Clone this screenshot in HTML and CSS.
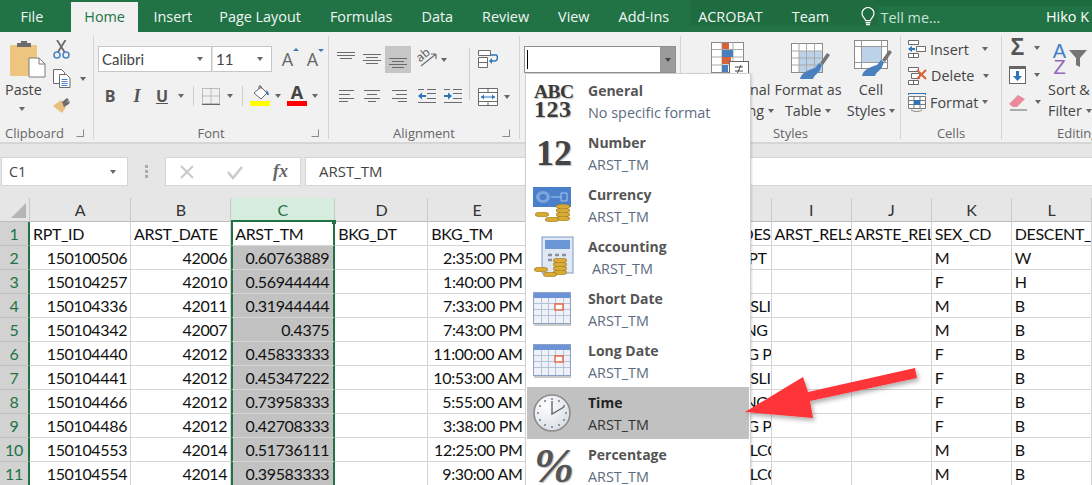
FILE: index.html
```html
<!DOCTYPE html>
<html lang="en">
<head>
<meta charset="utf-8">
<title>Excel number format menu</title>
<link rel="stylesheet" href="styles.css">
</head>
<body>
<svg class="defs" aria-hidden="true">
  <symbol id="lines-l" viewBox="0 0 16 12"><path d="M0 .5h15M0 4.500h11M0 8.500h15M0 11.500h9" stroke="#6b6b6b" fill="none"/></symbol>
  <symbol id="lines-c" viewBox="0 0 16 12"><path d="M0 .5h16M3 4.500h10M0 8.500h16M4 11.500h8" stroke="#6b6b6b" fill="none"/></symbol>
  <symbol id="lines-r" viewBox="0 0 16 12"><path d="M1 .5h15M5 4.500h11M1 8.500h15M7 11.500h9" stroke="#6b6b6b" fill="none"/></symbol>
  <symbol id="calendar" viewBox="0 0 40 34">
    <rect x=".5" y=".5" width="37" height="31" fill="#eef2f8" stroke="#8ea3c4"/>
    <rect x="1" y="1" width="36" height="5" fill="#6b93d6"/>
    <path d="M1 11.500h36M1 17.500h36M1 23.500h36M8.500 6v25M15.500 6v25M22.500 6v25M30.500 6v25" stroke="#b5c1d4" fill="none"/>
    <rect x="22" y="12" width="8" height="6" fill="#fff" stroke="#e8613c" stroke-width="1.400"/>
    <path d="M1 33h37" stroke="#c9c9c9" stroke-width="2"/>
  </symbol>
  <symbol id="coin" viewBox="0 0 14 5"><ellipse cx="7" cy="2.500" rx="7" ry="2.500" fill="#d9ab35" stroke="#8b6a14" stroke-width=".6"/></symbol>
</svg>

<div class="app">
  <nav class="tabs">
    <span class="tab file">File</span>
    <span class="tab active">Home</span>
    <span class="tab ins">Insert</span>
    <span class="tab">Page Layout</span>
    <span class="tab">Formulas</span>
    <span class="tab">Data</span>
    <span class="tab">Review</span>
    <span class="tab">View</span>
    <span class="tab">Add-ins</span>
    <span class="tab">ACROBAT</span>
    <span class="tab">Team</span>
    <span class="tell">
      <svg class="bulb" width="14" height="20" viewBox="0 0 14 20"><path d="M4.500 13.500C4 11 1 9.500 1 6.500a6 6 0 0 1 12 0c0 3-3 4.500-3.500 7z" fill="none" stroke="#fff" stroke-width="1.200"/><path d="M4.500 15.500h5M5 17.500h4" stroke="#fff" stroke-width="1.300"/></svg>
      <span class="tell-text">Tell me...</span>
    </span>
    <span class="user">Hiko K</span>
  </nav>

  <section class="ribbon">
    <div class="group clipboard">
      <div class="body clip-body">
        <div class="paste">
          <svg width="36" height="38" viewBox="0 0 36 38"><rect x="0" y="5" width="27" height="31" rx="1" fill="#eec57e"/><path d="M7 7V3h4V1h6v2h4v4z" fill="#6d6d6d"/><path d="M19 18h10l6 6v13H19z" fill="#fff" stroke="#7a7a7a"/><path d="M29 18v6h6" fill="none" stroke="#7a7a7a"/></svg>
          <span class="plain">Paste</span>
          <i class="caret"></i>
        </div>
        <div class="clip-tools">
          <svg width="17" height="19" viewBox="0 0 17 19"><path d="M4 0l7.500 12M12.500 0L5 12" stroke="#6a6a6a" stroke-width="1.800" fill="none"/><circle cx="4" cy="15" r="3" fill="none" stroke="#4a86c5" stroke-width="1.600"/><circle cx="13" cy="15" r="3" fill="none" stroke="#4a86c5" stroke-width="1.600"/></svg>
          <span class="tool-line">
            <svg width="18" height="19" viewBox="0 0 18 19"><path d="M.5.5h8l3 3v11H.5z" fill="#fff" stroke="#6a6a6a"/><path d="M6.500 5.500h7l3.500 3.500v9.500H6.500z" fill="#fff" stroke="#6a6a6a"/><path d="M8.500 10.500h6M8.500 12.500h6M8.500 14.500h6M8.500 16.500h6" stroke="#4a86c5"/></svg>
            <i class="caret"></i>
          </span>
          <svg width="18" height="16" viewBox="0 0 18 16"><path d="M0 8l8-6 5 7-4 6z" fill="#e8bf7c"/><path d="M9 4l5-4 2 2-2 2 3-1-1 3-5 3z" fill="#6d6d6d"/></svg>
        </div>
      </div>
      <div class="label">Clipboard<i class="launcher"></i></div>
    </div>

    <div class="group font">
      <div class="body font-body">
        <div class="font-row top">
          <span class="select name">Calibri<i class="caret"></i></span>
          <span class="select size">11<i class="caret"></i></span>
          <span class="grow">A<i class="tri up"></i></span>
          <span class="grow">A<i class="tri down"></i></span>
        </div>
        <div class="font-row bottom">
          <b class="fmt">B</b>
          <i class="fmt ital">I</i>
          <u class="fmt under">U</u>
          <i class="caret c-u"></i>
          <span class="vsep"></span>
          <svg width="18" height="17" viewBox="0 0 18 17"><path d="M.5.5h17v15H.5zM9 .5v15M.5 8h17" fill="none" stroke="#8a8a8a" stroke-dasharray="1 1"/><path d="M0 16.500h18" stroke="#666"/></svg>
          <i class="caret c-b"></i>
          <span class="vsep second"></span>
          <span class="swatch">
            <svg width="20" height="15" viewBox="0 0 20 15"><path d="M4 8l7-6 6 6-6 6z" fill="#fff" stroke="#666"/><path d="M9 4V1h2v3" fill="none" stroke="#666"/><path d="M16 5c2 1 3 3 3 5h-2z" fill="#3c78b9"/></svg>
            <i class="bar yellow"></i>
          </span>
          <i class="caret c-f"></i>
          <span class="swatch">
            <b class="color-a">A</b>
            <i class="bar red"></i>
          </span>
          <i class="caret c-f"></i>
        </div>
      </div>
      <div class="label">Font<i class="launcher"></i></div>
    </div>

    <div class="group alignment">
      <div class="body align-body">
        <div class="align-main">
          <div class="font-row a-top">
            <svg class="a1" width="18" height="7" viewBox="0 0 18 7"><path d="M0 .5h18M0 3.500h18M3 6.500h12" stroke="#6b6b6b"/></svg>
            <svg class="a2" width="18" height="10" viewBox="0 0 18 10"><path d="M0 .5h18M3 3.500h12M0 6.500h18M3 9.500h12" stroke="#6b6b6b"/></svg>
            <span class="pressed"><svg width="18" height="10" viewBox="0 0 18 10"><path d="M0 .5h18M3 3.500h12M0 6.500h18M3 9.500h12" stroke="#6b6b6b"/></svg></span>
            <svg class="orient" width="20" height="18" viewBox="0 0 20 18"><path d="M4 17L19 5M19 5h-5M19 5v5" stroke="#6b6b6b" fill="none" stroke-width="1.200"/><text class="ab" x="0" y="11" transform="rotate(-40 5 8)">ab</text></svg>
            <i class="caret"></i>
          </div>
          <div class="font-row a-bot">
            <svg class="l1" width="16" height="12"><use href="#lines-l"/></svg>
            <svg class="l2" width="16" height="12"><use href="#lines-c"/></svg>
            <svg class="l3" width="16" height="12"><use href="#lines-r"/></svg>
            <svg class="l4" width="18" height="14" viewBox="0 0 18 14"><path d="M9 .5h9M9 4.500h9M9 9.500h9M0 13.500h18M0 .5h6" stroke="#6b6b6b"/><path d="M0 7l4-3.500V6h4v2H4v2.500z" fill="#2e75b6"/></svg>
            <svg class="l5" width="18" height="14" viewBox="0 0 18 14"><path d="M9 .5h9M9 4.500h9M9 9.500h9M0 13.500h18M0 .5h6" stroke="#6b6b6b"/><path d="M8 7L4 3.500V6H0v2h4v2.500z" fill="#2e75b6"/></svg>
          </div>
        </div>
        <span class="vsep tall"></span>
        <div class="wrap-col">
          <svg width="20" height="18" viewBox="0 0 20 18"><path d="M.5.5h12v5H.5zM.5 7.500h9v5h-9zM.5 12.500h9v5h-9z" fill="#fff" stroke="#6b6b6b"/><path d="M12 5h6c2 0 2 6-1 6h-4" fill="none" stroke="#2e75b6" stroke-width="1.500"/><path d="M11 11l3-3v6z" fill="#2e75b6"/></svg>
          <span class="tool-line merge">
            <svg width="20" height="18" viewBox="0 0 20 18"><path d="M.5.5h19v17H.5zM.5 4.500h19M.5 13.500h19M10 .5v4M10 13.500v4" fill="#fff" stroke="#6b6b6b"/><path d="M3 9h14" stroke="#2e75b6"/><path d="M3 9l3-2.500v5zM17 9l-3-2.500v5z" fill="#2e75b6"/></svg>
            <i class="caret"></i>
          </span>
        </div>
      </div>
      <div class="label">Alignment<i class="launcher"></i></div>
    </div>

    <div class="group number">
      <div class="body">
        <div class="format-box"><i class="cursor"></i><span class="drop"><i class="caret dark"></i></span></div>
      </div>
    </div>

    <div class="group styles">
      <div class="body styles-body">
        <div class="big cond">
          <svg width="40" height="38" viewBox="0 0 40 38"><rect x=".5" y=".5" width="32" height="30" fill="#fff" stroke="#8a8a8a"/><path d="M11 .5v30M22 .5v30M.5 7.500h32M.5 15h32M.5 23h32" stroke="#aaa"/><rect x="11" y="1" width="7" height="6" fill="#d9623b"/><rect x="11" y="8" width="11" height="7" fill="#4a7fbd"/><rect x="11" y="15" width="9" height="7" fill="#d9623b"/><rect x="11" y="23" width="6" height="7" fill="#4a7fbd"/><rect x="18.500" y="19.500" width="19" height="17" fill="#fff" stroke="#666"/><path d="M24 25h8M24 29h8M30 23l-4 9" stroke="#444"/></svg>
          <span class="big-text">Conditional<br>Formatting <i class="caret inline"></i></span>
        </div>
        <div class="big fat">
          <svg width="39" height="38" viewBox="0 0 39 38"><rect x=".5" y=".5" width="31" height="29" fill="#fff" stroke="#8a8a8a"/><rect x="8" y="8" width="23" height="21" fill="#bcd2e8"/><path d="M8 .5v29M15.500 .5v29M23.500 .5v29M.5 8h31M.5 15h31M.5 22h31" stroke="#a9a9a9"/><path d="M29 20l7-10 3 2-7 10z" fill="#757575"/><path d="M24 25l4-5 3 2-2 5c-2 4-5 4-7 9H9c1-6 8-9 15-11z" fill="#4a80bd"/></svg>
          <span class="big-text">Format as<br>Table <i class="caret inline"></i></span>
        </div>
        <div class="big cell">
          <svg width="38" height="38" viewBox="0 0 38 38"><rect x=".5" y=".5" width="33" height="28" fill="#fff" stroke="#8a8a8a"/><rect x="8" y="7" width="19" height="15" fill="#bcd2e8"/><path d="M7.500 .5v28M27.500 .5v28M.5 6.500h33M.5 22.500h33" stroke="#9a9a9a"/><path d="M28 20l7-10 3 2-7 10z" fill="#757575"/><path d="M23 25l4-5 3 2-2 5c-2 4-5 4-7 9H8c1-6 8-9 15-11z" fill="#4a80bd"/></svg>
          <span class="big-text">Cell<br>Styles <i class="caret inline"></i></span>
        </div>
      </div>
      <div class="label">Styles</div>
    </div>

    <div class="group cells">
      <div class="body cells-body">
        <div class="cell-line">
          <svg width="18" height="18" viewBox="0 0 18 18"><path d="M.5.5h10v4H.5zM.5 13.500h10v4H.5zM5.500 13.500v4M8.500 6.500h9v5h-9z" fill="#fff" stroke="#6b6b6b"/><path d="M0 9l4-3v2h3v2H4v2z" fill="#2e75b6"/></svg>
          <span class="cell-text">Insert</span><i class="caret c-ins"></i>
        </div>
        <div class="cell-line">
          <svg width="19" height="18" viewBox="0 0 19 18"><path d="M.5.5h10v4H.5zM.5 13.500h10v4H.5zM5.500 13.500v4M3.500 6.500h8v5h-8z" fill="#fff" stroke="#6b6b6b"/><path d="M9 3l9 9M18 3l-9 9" stroke="#d9623b" stroke-width="2"/></svg>
          <span class="cell-text">Delete</span><i class="caret c-del"></i>
        </div>
        <div class="cell-line">
          <svg width="18" height="19" viewBox="0 0 18 19"><path d="M0 .5h18M.5 0v2M17.500 0v2" stroke="#2e75b6"/><path d="M.5 3.500h17v12H.5zM6 3.500v12M12 3.500v12M.5 7.500h17M.5 11.500h17" fill="#fff" stroke="#7a7a7a"/><rect x="6" y="7" width="6" height="5" fill="#2e75b6"/><path d="M3 17c3 2 8 2 11 0" fill="none" stroke="#888"/></svg>
          <span class="cell-text">Format</span><i class="caret c-fmt"></i>
        </div>
      </div>
      <div class="label">Cells</div>
    </div>

    <div class="group editing">
      <div class="body edit-body">
        <div class="edit-tools">
          <span class="edit-line"><b class="sigma">Σ</b><i class="caret"></i></span>
          <span class="edit-line"><svg width="17" height="18" viewBox="0 0 17 18"><rect x=".5" y=".5" width="16" height="17" fill="#fff" stroke="#666"/><path d="M.5 2h16" stroke="#666" stroke-width="2"/><path d="M7 5h3v5h3l-4.500 5L4 10h3z" fill="#2e75b6"/></svg><i class="caret"></i></span>
          <span class="edit-line"><svg width="18" height="18" viewBox="0 0 18 18"><path d="M0 11l9-9 7 4-8 8H4z" fill="#e98b9c"/><path d="M1 17h17" stroke="#666"/></svg><i class="caret"></i></span>
        </div>
        <div class="sort">
          <div class="sort-ico"><span class="az"><span class="a-l">A</span><span class="z-l">Z</span></span><svg width="18" height="18" viewBox="0 0 18 18"><path d="M0 0h18l-7 8v9l-4-2V8z" fill="#757575"/></svg></div>
          <span class="big-text">Sort &amp;<br>Filter <i class="caret inline"></i></span>
        </div>
      </div>
      <div class="label edit-label">Editing</div>
    </div>
  </section>

  <section class="formula">
    <div class="namebox">C1<i class="caret"></i></div>
    <span class="grip"></span>
    <div class="fx-box">
      <svg width="18" height="16" viewBox="0 0 18 16"><path d="M2 2l12 12M14 2L2 14" stroke="#c9c9c9" stroke-width="2"/></svg>
      <svg width="18" height="16" viewBox="0 0 18 16"><path d="M2 8l5 6L16 3" stroke="#c9c9c9" stroke-width="2.500" fill="none"/></svg>
      <em class="fx">fx</em>
    </div>
    <div class="formula-input">ARST_TM</div>
  </section>

  <table class="sheet">
    <colgroup>
      <col class="w-h"><col class="w-a"><col class="w-b"><col class="w-c"><col class="w-d"><col class="w-e"><col class="w-f"><col class="w-g"><col class="w-i"><col class="w-i"><col class="w-i"><col class="w-i"><col class="w-i">
    </colgroup>
    <thead>
      <tr><th class="corner"><i class="tri-corner"></i></th><th>A</th><th>B</th><th class="on">C</th><th>D</th><th>E</th><th>F</th><th>G</th><th>H</th><th>I</th><th>J</th><th>K</th><th>L</th></tr>
    </thead>
    <tbody>
      <tr class="first"><th>1</th><td>RPT_ID</td><td>ARST_DATE</td><td class="col-c top-c">ARST_TM<i class="handle"></i></td><td>BKG_DT</td><td>BKG_TM</td><td></td><td></td><td class="h"><span class="m1">DES</span></td><td>ARST_RELS</td><td>ARSTE_REL</td><td>SEX_CD</td><td>DESCENT_</td></tr>
      <tr><th>2</th><td class="n">150100506</td><td class="n">42006</td><td class="col-c n">0.60763889</td><td></td><td class="n">2:35:00 PM</td><td></td><td></td><td class="h"><span class="m4">PT</span></td><td></td><td></td><td>M</td><td>W</td></tr>
      <tr><th>3</th><td class="n">150104257</td><td class="n">42010</td><td class="col-c n">0.56944444</td><td></td><td class="n">1:40:00 PM</td><td></td><td></td><td class="h"></td><td></td><td></td><td>F</td><td>H</td></tr>
      <tr><th>4</th><td class="n">150104336</td><td class="n">42011</td><td class="col-c n">0.31944444</td><td></td><td class="n">7:33:00 PM</td><td></td><td></td><td class="h"><span class="m1">'SLI</span></td><td></td><td></td><td>M</td><td>B</td></tr>
      <tr><th>5</th><td class="n">150104342</td><td class="n">42007</td><td class="col-c n">0.4375</td><td></td><td class="n">7:43:00 PM</td><td></td><td></td><td class="h"><span class="m3">NG</span></td><td></td><td></td><td>M</td><td>B</td></tr>
      <tr><th>6</th><td class="n">150104440</td><td class="n">42012</td><td class="col-c n">0.45833333</td><td></td><td class="n">11:00:00 AM</td><td></td><td></td><td class="h"><span class="cut">G P</span></td><td></td><td></td><td>F</td><td>B</td></tr>
      <tr><th>7</th><td class="n">150104441</td><td class="n">42012</td><td class="col-c n">0.45347222</td><td></td><td class="n">10:53:00 AM</td><td></td><td></td><td class="h"><span class="m1">'SLI</span></td><td></td><td></td><td>F</td><td>B</td></tr>
      <tr><th>8</th><td class="n">150104466</td><td class="n">42012</td><td class="col-c n">0.73958333</td><td></td><td class="n">5:55:00 AM</td><td></td><td></td><td class="h"><span class="m3">NG</span></td><td></td><td></td><td>F</td><td>B</td></tr>
      <tr><th>9</th><td class="n">150104486</td><td class="n">42012</td><td class="col-c n">0.42708333</td><td></td><td class="n">3:38:00 PM</td><td></td><td></td><td class="h"><span class="cut">G P</span></td><td></td><td></td><td>F</td><td>B</td></tr>
      <tr><th>10</th><td class="n">150104553</td><td class="n">42014</td><td class="col-c n">0.51736111</td><td></td><td class="n">12:25:00 PM</td><td></td><td></td><td class="h"><span class="cut-l">LCO</span></td><td></td><td></td><td>M</td><td>B</td></tr>
      <tr><th>11</th><td class="n">150104554</td><td class="n">42014</td><td class="col-c n">0.39583333</td><td></td><td class="n">9:30:00 AM</td><td></td><td></td><td class="h"><span class="cut-l">LCO</span></td><td></td><td></td><td>M</td><td>B</td></tr>
    </tbody>
  </table>

  <ul class="menu">
    <li class="item">
      <span class="ico glyph abc"><span>ABC</span><span class="num">123</span></span>
      <span class="txt"><b>General</b><span>No specific format</span></span>
    </li>
    <li class="item">
      <span class="ico glyph twelve">12</span>
      <span class="txt"><b>Number</b><span>ARST_TM</span></span>
    </li>
    <li class="item">
      <span class="ico">
        <svg width="40" height="38" viewBox="0 0 40 38"><rect x="0" y="1" width="38" height="20" fill="#4a7fc9"/><ellipse cx="10" cy="11" rx="7" ry="6" fill="#7fa6dd"/><ellipse cx="10" cy="11" rx="3.500" ry="3" fill="#4a7fc9"/><path d="M18 11h10M28 7h6v8h-6z" stroke="#a9c4ea" fill="none"/><use href="#coin" x="23" y="18" width="14" height="5"/><use href="#coin" x="23" y="22" width="14" height="5"/><use href="#coin" x="23" y="26" width="14" height="5"/><use href="#coin" x="23" y="30" width="14" height="5"/><use href="#coin" x="2" y="26" width="14" height="5"/><use href="#coin" x="12" y="31" width="14" height="5"/></svg>
      </span>
      <span class="txt"><b>Currency</b><span>ARST_TM</span></span>
    </li>
    <li class="item">
      <span class="ico">
        <svg width="42" height="42" viewBox="0 0 42 42"><rect x="9" y="1" width="31" height="36" fill="#dfe8f4" stroke="#7d9ac4"/><rect x="12" y="4" width="25" height="9" fill="#6b97d6"/><path d="M15 19h4M22 19h4M29 19h4M15 24h4M22 24h4M29 24h4M29 29h4" stroke="#8a8f98" stroke-width="2.500"/><use href="#coin" x="20" y="22" width="14" height="5"/><use href="#coin" x="20" y="26" width="14" height="5"/><use href="#coin" x="20" y="30" width="14" height="5"/><use href="#coin" x="20" y="34" width="14" height="5"/><use href="#coin" x="1" y="31" width="14" height="5"/><use href="#coin" x="10" y="36" width="14" height="5"/></svg>
      </span>
      <span class="txt"><b>Accounting</b><span class="nudge">ARST_TM</span></span>
    </li>
    <li class="item">
      <span class="ico"><svg width="40" height="34"><use href="#calendar"/></svg></span>
      <span class="txt"><b>Short Date</b><span>ARST_TM</span></span>
    </li>
    <li class="item">
      <span class="ico"><svg width="40" height="34"><use href="#calendar"/></svg></span>
      <span class="txt"><b>Long Date</b><span>ARST_TM</span></span>
    </li>
    <li class="item sel">
      <span class="ico">
        <svg width="40" height="40" viewBox="0 0 40 40"><defs><radialGradient id="face" cx=".35" cy=".3" r=".9"><stop offset="0" stop-color="#fff"/><stop offset="1" stop-color="#cfd6e2"/></radialGradient></defs><circle cx="19" cy="20" r="18" fill="url(#face)" stroke="#8c8c8c" stroke-width="1.600"/><g fill="#7d7d7d"><circle cx="19" cy="6" r="1"/><circle cx="19" cy="34" r="1"/><circle cx="5" cy="20" r="1"/><circle cx="33" cy="20" r="1"/><circle cx="12" cy="8" r="1"/><circle cx="26" cy="8" r="1"/><circle cx="12" cy="32" r="1"/><circle cx="26" cy="32" r="1"/><circle cx="7" cy="13" r="1"/><circle cx="31" cy="13" r="1"/><circle cx="7" cy="27" r="1"/><circle cx="31" cy="27" r="1"/></g><path d="M19 8v13l12-7" fill="none" stroke="#666" stroke-width="1.400"/></svg>
      </span>
      <span class="txt"><b>Time</b><span>ARST_TM</span></span>
    </li>
    <li class="item">
      <span class="ico glyph pct">%</span>
      <span class="txt"><b>Percentage</b><span>ARST_TM</span></span>
    </li>
  </ul>

  <svg class="arrow" width="190" height="70" viewBox="0 0 190 70" aria-hidden="true">
    <defs><filter id="sh" x="-10%" y="-20%" width="120%" height="150%"><feDropShadow dx="2" dy="3" stdDeviation="2" flood-color="#000" flood-opacity=".3"/></filter></defs>
    <path d="M3 45L61 10l5 15L173 1l2 10L68 34l3 17z" fill="#fe3438" filter="url(#sh)"/>
  </svg>
</div>
</body>
</html>
```

FILE: styles.css
```css
* { box-sizing: border-box; }
html, body { margin: 0; padding: 0; }
body { width: 1092px; height: 485px; overflow: hidden; background: #e6e6e6; font-family: "Open Sans", "Noto Sans", sans-serif; color: #444; }
.defs { position: absolute; width: 0; height: 0; }
i { font-style: normal; }
.app { position: relative; width: 1092px; height: 485px; overflow: hidden; }

/* tabs */
.tabs {
  display: flex; align-items: flex-end; height: 32px; color: #fff; font-size: 14.4px; padding-left: 6px;
  background:
    linear-gradient(#1f6c41, #1f6c41) 690px 0 / 188px 26px no-repeat,
    linear-gradient(#1e6a3f, #1e6a3f) 878px 0 / 214px 6px no-repeat,
    #217346;
}
.tab { height: 30px; padding: 0 14.5px; line-height: 29px; white-space: nowrap; color: #f1f6f3; }
.tab.file { margin-right: 14px; padding-right: 14px; }
.tab.active { background: #f1f1f1; color: #217346; padding: 0 13px; margin-right: 1px; }
.tab.ins { margin-right: -2px; }
.tell { display: flex; align-items: center; gap: 6px; height: 30px; margin-left: 17px; }
.tell-text { color: #c9e3d4; }
.user { margin-left: auto; height: 30px; line-height: 29px; width: 46px; white-space: nowrap; overflow: hidden; }

/* ribbon */
.ribbon { display: flex; height: 112px; background: #f1f1f1; border-bottom: 2px solid #d6d6d6; padding-top: 4px; }
.group { display: flex; flex-direction: column; flex: none; height: 103px; border-right: 1px solid #d4d4d4; position: relative; }
.body { flex: none; height: 89px; }
.label { position: relative; flex: none; height: 16px; font-size: 13px; line-height: 16px; text-align: center; color: #666; white-space: nowrap; }
.launcher { position: absolute; right: 9px; top: 4px; width: 8px; height: 8px; border: 1px solid #8a8a8a; border-top-color: transparent; border-left-color: transparent; }
.caret { display: inline-block; flex: none; width: 0; height: 0; border: 3.5px solid transparent; border-top: 4px solid #666; border-bottom: 0; }
.caret.inline { vertical-align: middle; margin-bottom: 2px; }
.caret.dark { border-top-color: #444; }

.clipboard { width: 94px; }
.clip-body { display: flex; padding-top: 4px; }
.paste { width: 47px; padding-left: 10px; display: flex; flex-direction: column; }
.plain { font-size: 14.4px; margin: 2px 0 0 -5px; line-height: 20px; }
.paste .caret { margin: 7px 0 0 9px; }
.clip-tools { margin-left: 6px; display: flex; flex-direction: column; gap: 10px; }
.tool-line { display: flex; align-items: center; gap: 9px; }
.clipboard .label { text-align: left; padding-left: 5px; }

.font { width: 235px; }
.font-body { padding: 10px 0 0 4px; }
.font-row { display: flex; align-items: center; }
.font-row > * { flex: none; }
.top { height: 26px; }
.select { position: relative; display: flex; align-items: center; height: 26px; background: #fff; border: 1px solid #c6c6c6; font-size: 15px; padding-left: 3px; font-family: Lato, sans-serif; color: #444; }
.select .caret { position: absolute; right: 8px; top: 10px; }
.select.name { width: 114px; }
.select.size { width: 60px; border-left-color: #e0e0e0; }
.grow { position: relative; width: 25px; font-size: 18px; line-height: 26px; text-align: center; color: #666; }
.select.size + .grow { margin-left: 3px; }
.tri { position: absolute; right: 1px; width: 0; height: 0; border: 3px solid transparent; }
.tri.up { top: 2px; border-top: 0; border-bottom: 3px solid #3c78b9; }
.tri.down { top: 3px; border-bottom: 0; border-top: 3px solid #3c78b9; }
.bottom { margin-top: 11px; height: 26px; }
.fmt { width: 14px; text-align: center; font-size: 16px; color: #555; }
.bottom .fmt:first-child { margin-left: 5px; }
.ital { margin-left: 13px; font-family: "Liberation Serif", serif; font-style: italic; font-weight: 700; font-size: 18px; }
.under { margin-left: 11px; font-weight: 700; }
.c-u { margin-left: 9px; }
.vsep { width: 1px; height: 20px; background: #cfcfcf; margin: 0 8px 0 9px; }
.vsep.second { margin-right: 7px; }
.c-b { margin-left: 7px; }
.swatch { display: flex; flex-direction: column; align-items: center; width: 20px; height: 21px; margin-top: -1px; }
.swatch svg { display: block; }
.bar { display: block; width: 20px; height: 5px; margin-top: 1px; }
.yellow { background: #ffff00; }
.red { background: #ff0000; }
.color-a { font-size: 18px; line-height: 15px; height: 15px; color: #444; }
.c-f { margin: 0 6px 0 5px; }

.alignment { width: 191px; }
.align-body { display: flex; padding: 10px 0 0 8px; }
.align-main { width: 132px; }
.a-top { height: 27px; position: relative; }
.a1 { margin-top: -8px; }
.a2 { margin-left: 8px; margin-top: -2px; }
.pressed { display: flex; align-items: flex-end; justify-content: center; width: 26px; height: 27px; background: #c6c6c6; padding-bottom: 5px; margin-left: 4px; }
.orient { margin-left: 6px; margin-top: -3px; }
.ab { font-size: 12px; fill: #555; }
.a-top .caret { margin-left: 4px; }
.a-bot { margin-top: 10px; height: 26px; }
.l1 { margin-left: 2px; }
.l2 { margin-left: 9px; }
.l3 { margin-left: 11px; }
.l4 { margin-left: 11px; }
.l5 { margin-left: 8px; }
.tall { height: 52px; margin: 2px 8px 0 0; }
.wrap-col { display: flex; flex-direction: column; gap: 20px; padding-top: 4px; }
.merge { gap: 6px; }

.number { width: 161px; }
.format-box { position: relative; margin: 10px 0 0 4px; width: 152px; height: 27px; background: #fff; border: 1px solid #8f8f8f; }
.cursor { position: absolute; left: 2px; top: 3px; width: 1px; height: 19px; background: #000; }
.drop { position: absolute; right: 0; top: 0; width: 15px; height: 25px; background: #9b9b9b; display: flex; align-items: center; justify-content: center; }

.styles { width: 220px; }
.styles-body { display: flex; padding-top: 6px; }
.big { display: flex; flex-direction: column; align-items: center; }
.big-text { font-size: 14.4px; line-height: 21px; text-align: center; color: #444; white-space: nowrap; margin-top: -1px; }
.big svg { height: 38px; }
.cond { width: 78px; margin-left: 12px; }
.cond svg { margin-left: -2px; }
.fat { width: 74px; }
.fat svg { margin: 1px 0 -1px 4px; }
.cell { width: 48px; margin-left: 2px; }
.cell svg { margin: -2px 0 2px 4px; }

.cells { width: 101px; }
.cells-body { padding-left: 7px; }
.cell-line { display: flex; align-items: center; height: 26.500px; }
.cell-line svg { flex: none; }
.cell-text { font-size: 14.4px; margin-left: 4px; }
.c-ins { margin-left: 13px; }
.c-del { margin-left: 9px; }
.c-fmt { margin-left: 4px; }

.editing { width: 90px; border-right: 0; }
.edit-body { display: flex; padding-left: 7px; }
.edit-tools { flex: none; width: 38px; display: flex; flex-direction: column; gap: 4px; }
.edit-line { display: flex; align-items: center; height: 23px; gap: 8px; }
.edit-line svg { flex: none; }
.sigma { width: 17px; font-size: 23px; line-height: 23px; font-weight: 700; color: #555; text-align: center; font-family: "Liberation Sans", sans-serif; }
.sort { flex: none; display: flex; flex-direction: column; align-items: flex-start; margin-left: 1px; }
.sort .big-text { text-align: left; margin-top: 0; }
.sort-ico { display: flex; align-items: center; gap: 2px; height: 43px; padding-left: 4px; padding-top: 2px; }
.sort-ico svg { flex: none; }
.az { display: flex; flex-direction: column; flex: none; width: 15px; text-align: center; font-size: 20px; line-height: 16px; font-family: "Liberation Sans", sans-serif; }
.a-l { color: #3f7fc5; }
.z-l { color: #9468b8; }
.edit-label { text-align: left; padding-left: 55px; width: 110px; }

/* formula bar */
.formula { display: flex; align-items: center; height: 52px; padding: 13px 0 10px 1px; background: #e6e6e6; }
.namebox { position: relative; width: 127px; height: 29px; background: #fff; border: 1px solid #d4d4d4; font-size: 14.4px; padding: 0 7px; line-height: 27px; }
.namebox .caret { position: absolute; right: 11px; top: 12px; }
.grip { width: 2px; height: 13px; margin: 0 17px 0 17px; border-left: 3px dotted #aaa; }
.fx-box { display: flex; align-items: center; justify-content: space-between; width: 136px; height: 29px; background: #fff; border: 1px solid #d4d4d4; padding: 0 12px 0 13px; }
.fx { font-family: "Liberation Serif", serif; font-size: 18px; font-weight: 700; color: #666; }
.formula-input { flex: 1; height: 29px; margin-left: 4px; background: #fff; border: 1px solid #d4d4d4; border-right: 0; font-size: 15px; line-height: 27px; padding-left: 13px; }

/* sheet */
.sheet { border-collapse: separate; border-spacing: 0; table-layout: fixed; width: 1092px; margin-top: 2px; font-family: Lato, sans-serif; font-size: 16px; letter-spacing: -.35px; color: #111; background: #fff; }
.w-h { width: 30px; } .w-a { width: 101px; } .w-b { width: 100px; } .w-c { width: 104px; } .w-d { width: 93px; } .w-e { width: 98px; } .w-f { width: 85px; } .w-g { width: 80px; } .w-i { width: 80px; }
.sheet thead th { height: 24px; background: #e6e6e6; border-right: 1px solid #c9c9c9; font-weight: 400; font-size: 16px; color: #333; padding: 0; border-bottom: 1px solid #bcbcbc; }
.sheet thead th.on { background: #d5ecdf; color: #217346; border-bottom: 2px solid #217346; }
.sheet .corner { position: relative; }
.tri-corner { position: absolute; right: 3px; bottom: 3px; width: 0; height: 0; border-left: 15px solid transparent; border-bottom: 15px solid #b5b5b5; }
.sheet tbody th { background: #d2d2d2; border-right: 2px solid #217346; border-bottom: 1px solid #c0c0c0; color: #217346; font-weight: 400; font-size: 16px; padding: 0; height: 24px; }
.sheet td { height: 24px; padding: 0 3px; border-right: 1px solid #d4d4d4; border-bottom: 1px solid #d4d4d4; white-space: nowrap; overflow: hidden; }
.sheet td.n { text-align: right; }
.sheet td.col-c { position: relative; overflow: visible; padding-left: 2px; padding-right: 4px; border-left: 2px solid #217346; border-right: 2px solid #217346; background: #c2c2c2; }
.sheet td.top-c { background: #fff; }
.handle { position: absolute; right: -3px; top: -2px; width: 4px; height: 4px; background: #217346; }
.sheet td.h { text-align: right; padding: 0; }
.m1 { margin-right: 0; }
.m3 { margin-right: 3px; }
.m4 { margin-right: 4px; }
.cut { margin-right: -1px; }
.cut-l { margin-right: -9px; }

/* menu */
.menu { position: absolute; left: 525px; top: 73px; width: 226px; height: 420px; margin: 0; padding: 1px; list-style: none; background: #fff; border: 1px solid #d0d0d0; box-shadow: 1px 1px 2px rgba(0,0,0,.15); }
.item { display: flex; height: 52px; }
.item.sel { background: #c1c1c1; color: #262626; }
.ico { flex: none; width: 60px; height: 52px; padding-left: 6px; display: flex; align-items: center; }
.txt { display: flex; flex-direction: column; font-size: 14.4px; line-height: 22px; padding-top: 5px; color: #5c6b80; margin-left: 1px; }
.txt b { color: #555; font-weight: 700; font-size: 14px; }
.sel .txt { color: #333; }
.sel .txt b { color: #222; }
.nudge { padding-left: 4px; }
.glyph { font-family: "Liberation Serif", serif; font-weight: 700; color: #3a3a3a; text-shadow: 1px 1px 1px rgba(0,0,0,.25); }
.abc { flex-direction: column; align-items: flex-start; justify-content: center; font-size: 19.5px; line-height: 17px; padding-left: 7px; letter-spacing: -.5px; }
.num { font-size: 24px; line-height: 19px; letter-spacing: .5px; }
.twelve { font-size: 36px; padding-left: 9px; color: #444; }
.pct { font-size: 48px; font-style: italic; padding-left: 7px; color: #555; }

.arrow { position: absolute; left: 742px; top: 367px; }
```
